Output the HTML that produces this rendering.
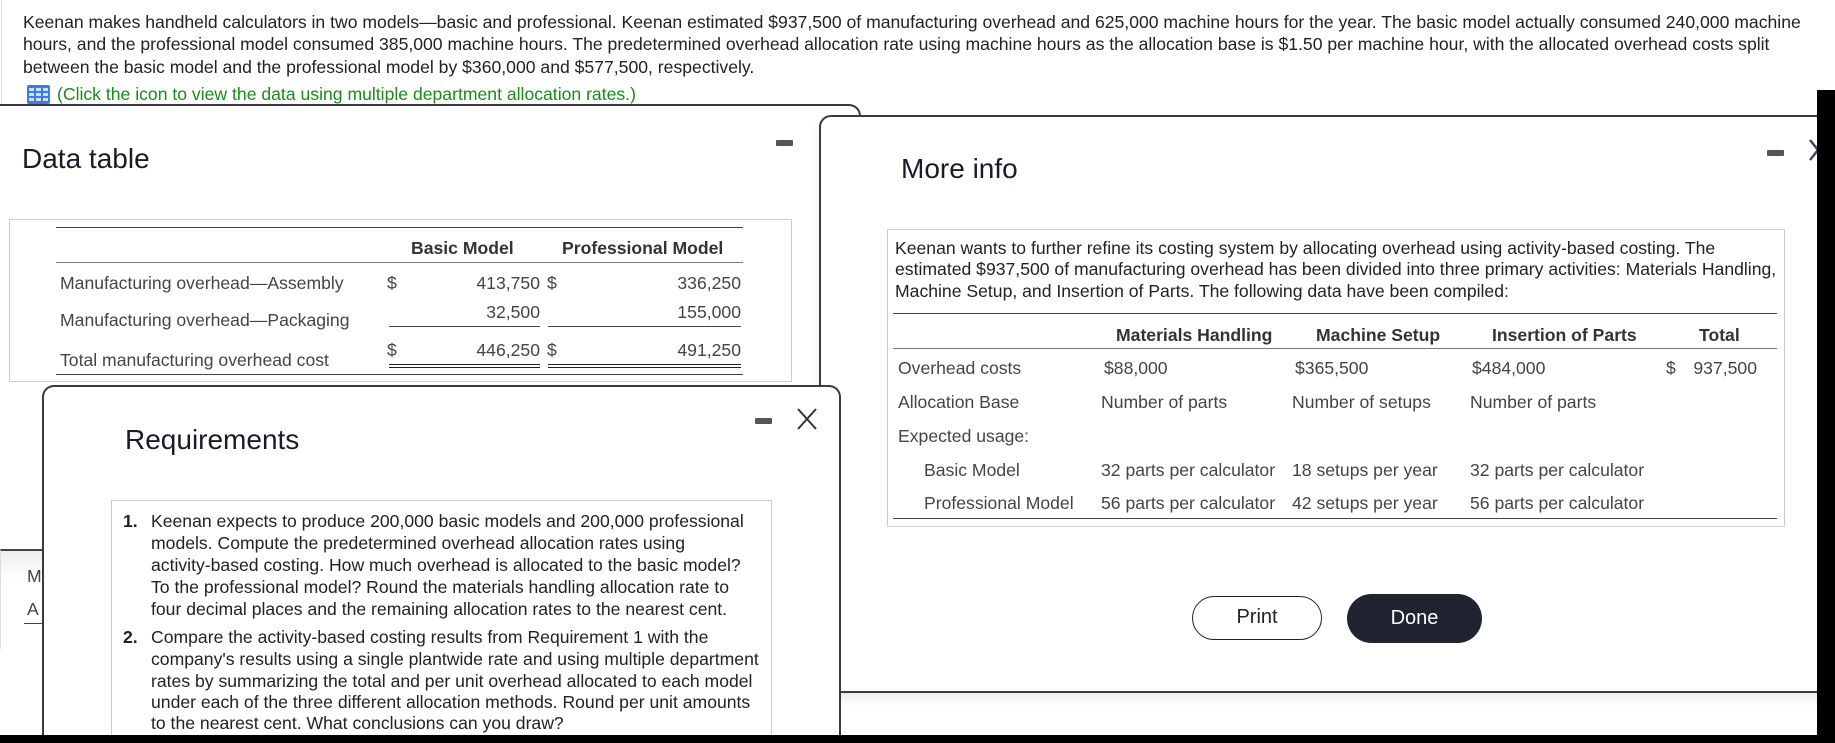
<!DOCTYPE html>
<html><head><meta charset="utf-8"><style>
*{margin:0;padding:0;box-sizing:border-box}
html,body{width:1835px;height:743px;overflow:hidden}
body{background:#fff;position:relative;font-family:"Liberation Sans",Arial,sans-serif;color:#222}
.a{position:absolute;white-space:nowrap}
.t{font-size:17.6px;line-height:22px}
.g{color:#444}
.h{font-weight:bold;color:#333}
.ln{position:absolute;height:1px;background:#444}
.min{position:absolute;width:17px;height:6px;background:#555;border-radius:1px}
.r{text-align:right}
.ttl{position:absolute;font-size:28px;color:#1a1a2a;white-space:nowrap}
</style></head><body>
<div class="a t" style="left:23px;top:11px;">Keenan makes handheld calculators in two models—basic and professional. Keenan estimated $937,500 of manufacturing overhead and 625,000 machine hours for the year. The basic model actually consumed 240,000 machine</div>
<div class="a t" style="left:23px;top:33px;">hours, and the professional model consumed 385,000 machine hours. The predetermined overhead allocation rate using machine hours as the allocation base is $1.50 per machine hour, with the allocated overhead costs split</div>
<div class="a t" style="left:23px;top:56px;">between the basic model and the professional model by $360,000 and $577,500, respectively.</div>
<svg class="a" style="left:27px;top:85px" width="23" height="19"><rect width="23" height="19" rx="2" fill="#3b7de0"/><g fill="#cfe0fa"><rect x="2" y="3" width="5" height="3"/><rect x="9" y="3" width="5" height="3"/><rect x="16" y="3" width="5" height="3"/><rect x="2" y="8" width="5" height="3"/><rect x="9" y="8" width="5" height="3"/><rect x="16" y="8" width="5" height="3"/><rect x="2" y="13" width="5" height="3"/><rect x="9" y="13" width="5" height="3"/><rect x="16" y="13" width="5" height="3"/></g></svg>
<div class="a t" style="left:57px;top:83px;color:#1a8a1a">(Click the icon to view the data using multiple department allocation rates.)</div>
<div class="a" style="left:1px;top:0;width:1px;height:105px;background:#ddd"></div>

<!-- Data table window -->
<div class="a" style="left:-14px;top:104px;width:875px;height:446px;background:#fff;border:2px solid #3a3a3a;border-bottom:none;border-radius:12px 12px 0 0"></div>

<!-- behind panel -->
<div class="a" style="left:0;top:549px;width:45px;height:100px;background:linear-gradient(#eee,#fff 30%);border-top:2px solid #444;border-left:1px solid #ddd"></div>
<div class="a t g" style="left:27px;top:565px">M</div>
<div class="a t g" style="left:27px;top:598px">A</div>
<div class="ln" style="left:24px;top:623px;width:20px"></div>

<div class="ttl" style="left:22px;top:143px">Data table</div>
<div class="min" style="left:776px;top:140px"></div>
<div class="a" style="left:9px;top:219px;width:783px;height:163px;border:1px solid #ccc"></div>
<div class="ln" style="left:56px;top:227px;width:687px"></div>
<div class="a t h" style="left:411px;top:237px">Basic Model</div>
<div class="a t h" style="left:562px;top:237px">Professional Model</div>
<div class="ln" style="left:56px;top:262px;width:687px;background:#777"></div>
<div class="a t g" style="left:60px;top:272px">Manufacturing overhead—Assembly</div>
<div class="a t g" style="left:387px;top:272px">$</div>
<div class="a t g r" style="left:440px;top:272px;width:100px">413,750</div>
<div class="a t g" style="left:547px;top:272px">$</div>
<div class="a t g r" style="left:640px;top:272px;width:101px">336,250</div>
<div class="a t g" style="left:60px;top:309px">Manufacturing overhead—Packaging</div>
<div class="a t g r" style="left:440px;top:301px;width:100px">32,500</div>
<div class="a t g r" style="left:640px;top:301px;width:101px">155,000</div>
<div class="ln" style="left:389px;top:326px;width:151px"></div>
<div class="ln" style="left:548px;top:326px;width:193px"></div>
<div class="a t g" style="left:60px;top:349px">Total manufacturing overhead cost</div>
<div class="a t g" style="left:387px;top:339px">$</div>
<div class="a t g r" style="left:440px;top:339px;width:100px">446,250</div>
<div class="a t g" style="left:547px;top:339px">$</div>
<div class="a t g r" style="left:640px;top:339px;width:101px">491,250</div>
<div class="a" style="left:389px;top:364px;width:151px;height:4px;border-top:1px solid #222;border-bottom:1px solid #222"></div>
<div class="a" style="left:548px;top:364px;width:193px;height:4px;border-top:1px solid #222;border-bottom:1px solid #222"></div>
<div class="ln" style="left:56px;top:374px;width:687px"></div>

<!-- More info window -->
<div class="a" style="left:819px;top:115px;width:1100px;height:578px;background:#fff;border:2px solid #3a3a3a;border-radius:12px;box-shadow:0 6px 10px rgba(0,0,0,0.08)"></div>
<div class="ttl" style="left:901px;top:153px">More info</div>
<div class="min" style="left:1767px;top:150px"></div>
<div class="a" style="left:887px;top:229px;width:898px;height:298px;border:1px solid #ccc"></div>
<div class="a t" style="left:895px;top:237px">Keenan wants to further refine its costing system by allocating overhead using activity-based costing. The</div>
<div class="a t" style="left:895px;top:258px">estimated $937,500 of manufacturing overhead has been divided into three primary activities: Materials Handling,</div>
<div class="a t" style="left:895px;top:280px">Machine Setup, and Insertion of Parts. The following data have been compiled:</div>
<div class="ln" style="left:893px;top:313px;width:884px"></div>
<div class="a t h" style="left:1116px;top:324px">Materials Handling</div>
<div class="a t h" style="left:1316px;top:324px">Machine Setup</div>
<div class="a t h" style="left:1492px;top:324px">Insertion of Parts</div>
<div class="a t h" style="left:1699px;top:324px">Total</div>
<div class="ln" style="left:893px;top:348px;width:884px;background:#777"></div>
<div class="a t g" style="left:898px;top:357px">Overhead costs</div>
<div class="a t g" style="left:1104px;top:357px">$88,000</div>
<div class="a t g" style="left:1295px;top:357px">$365,500</div>
<div class="a t g" style="left:1472px;top:357px">$484,000</div>
<div class="a t g" style="left:1666px;top:357px">$</div>
<div class="a t g r" style="left:1680px;top:357px;width:77px">937,500</div>
<div class="a t g" style="left:898px;top:391px">Allocation Base</div>
<div class="a t g" style="left:1101px;top:391px">Number of parts</div>
<div class="a t g" style="left:1292px;top:391px">Number of setups</div>
<div class="a t g" style="left:1470px;top:391px">Number of parts</div>
<div class="a t g" style="left:898px;top:425px">Expected usage:</div>
<div class="a t g" style="left:924px;top:459px">Basic Model</div>
<div class="a t g" style="left:1101px;top:459px">32 parts per calculator</div>
<div class="a t g" style="left:1292px;top:459px">18 setups per year</div>
<div class="a t g" style="left:1470px;top:459px">32 parts per calculator</div>
<div class="a t g" style="left:924px;top:492px">Professional Model</div>
<div class="a t g" style="left:1101px;top:492px">56 parts per calculator</div>
<div class="a t g" style="left:1292px;top:492px">42 setups per year</div>
<div class="a t g" style="left:1470px;top:492px">56 parts per calculator</div>
<div class="ln" style="left:893px;top:518px;width:884px"></div>
<div class="a" style="left:1192px;top:596px;width:130px;height:44px;border:1.5px solid #222;border-radius:22px;font-size:20px;line-height:41px;text-align:center;color:#222">Print</div>
<div class="a" style="left:1347px;top:594px;width:135px;height:49px;background:#1f2430;border-radius:25px;font-size:20px;line-height:49px;text-align:center;color:#fff">Done</div>
<svg class="a" style="left:1809px;top:138px" width="10" height="24"><path d="M1 2 L9 12 L1 22" stroke="#445" stroke-width="2.5" fill="none"/></svg>

<!-- Requirements window -->
<div class="a" style="left:42px;top:385px;width:799px;height:358px;background:#fff;border:2px solid #3a3a3a;border-bottom:none;border-radius:12px 12px 0 0"></div>
<div class="ttl" style="left:125px;top:424px">Requirements</div>
<div class="min" style="left:755px;top:418px"></div>
<svg class="a" style="left:796px;top:407px" width="22" height="24"><path d="M2 2 L20 22 M20 2 L2 22" stroke="#333" stroke-width="2" fill="none"/></svg>
<div class="a" style="left:111px;top:500px;width:661px;height:243px;border:1px solid #ccc;border-bottom:none"></div>
<div class="a t" style="left:123px;top:510px;font-weight:bold">1.</div>
<div class="a t" style="left:151px;top:510px">Keenan expects to produce 200,000 basic models and 200,000 professional</div>
<div class="a t" style="left:151px;top:532px">models. Compute the predetermined overhead allocation rates using</div>
<div class="a t" style="left:151px;top:554px">activity-based costing. How much overhead is allocated to the basic model?</div>
<div class="a t" style="left:151px;top:576px">To the professional model? Round the materials handling allocation rate to</div>
<div class="a t" style="left:151px;top:598px">four decimal places and the remaining allocation rates to the nearest cent.</div>
<div class="a t" style="left:123px;top:626px;font-weight:bold">2.</div>
<div class="a t" style="left:151px;top:626px">Compare the activity-based costing results from Requirement 1 with the</div>
<div class="a t" style="left:151px;top:648px">company's results using a single plantwide rate and using multiple department</div>
<div class="a t" style="left:151px;top:670px">rates by summarizing the total and per unit overhead allocated to each model</div>
<div class="a t" style="left:151px;top:691px">under each of the three different allocation methods. Round per unit amounts</div>
<div class="a t" style="left:151px;top:712px">to the nearest cent. What conclusions can you draw?</div>

<!-- black edges -->
<div class="a" style="left:1817px;top:90px;width:18px;height:653px;background:#000"></div>
<div class="a" style="left:0;top:735px;width:1835px;height:8px;background:#000"></div>
</body></html>
